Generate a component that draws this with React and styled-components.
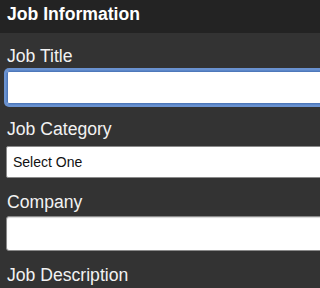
import React from 'react'
import styled, { createGlobalStyle } from 'styled-components'

const GlobalStyle = createGlobalStyle`
  html, body {
    margin: 0;
    padding: 0;
    background: #333;
    overflow: hidden;
  }
  body {
    font-family: "Liberation Sans", Arial, Helvetica, sans-serif;
  }
`

const Panel = styled.section`
  width: 100%;
  min-height: 288px;
  overflow: hidden;
  background: #333;
  color: #fff;
`

const Header = styled.h2`
  margin: 0;
  height: 33px;
  box-sizing: border-box;
  padding: 4px 7px 8px;
  background: #232323;
  font-size: 17.6px;
  line-height: 21px;
  font-weight: bold;
  color: #fff;
`

const Form = styled.form`
  display: flex;
  flex-direction: column;
  gap: 14px;
  padding: 13px 0 0 6px;
`

const Field = styled.div`
  display: flex;
  flex-direction: column;
`

const Label = styled.label`
  font-size: 17.6px;
  line-height: 21px;
  padding-left: 1px;
  margin-bottom: 3px;
  color: #f2f2f2;
`

const TextInput = styled.input`
  box-sizing: border-box;
  width: calc(100% + 40px);
  height: 35px;
  margin: 0;
  padding: 0 6px;
  background: #fff;
  border: 1px solid ${p => (p.$focused ? '#5b86c8' : '#8a8a8a')};
  border-radius: 3px;
  box-shadow: ${p => (p.$focused ? '0 0 0 2px #6a92d0, inset 0 0 0 1px #4e78ba' : 'inset 0 1px 1px rgba(0,0,0,0.15)')};
  font-family: "Liberation Sans", Arial, sans-serif;
  font-size: 14px;
  outline: none;
`

const Select = styled.select`
  appearance: none;
  -webkit-appearance: none;
  box-sizing: border-box;
  width: calc(100% + 40px);
  height: 32px;
  margin: 3px 0 0;
  padding: 0 6px;
  background: #fff;
  color: #111;
  border: 1px solid #8a8a8a;
  border-radius: 2px;
  font-family: "Liberation Sans", Arial, sans-serif;
  font-size: 14px;
  outline: none;
`

export default function App() {
  return (
    <>
      <GlobalStyle />
      <Panel>
        <Header>Job Information</Header>
        <Form onSubmit={e => e.preventDefault()}>
          <Field>
            <Label htmlFor="title">Job Title</Label>
            <TextInput id="title" type="text" $focused />
          </Field>
          <Field>
            <Label htmlFor="category">Job Category</Label>
            <Select id="category" defaultValue="">
              <option value="">Select One</option>
            </Select>
          </Field>
          <Field>
            <Label htmlFor="company">Company</Label>
            <TextInput id="company" type="text" />
          </Field>
          <Field>
            <Label htmlFor="description">Job Description</Label>
          </Field>
        </Form>
      </Panel>
    </>
  )
}
